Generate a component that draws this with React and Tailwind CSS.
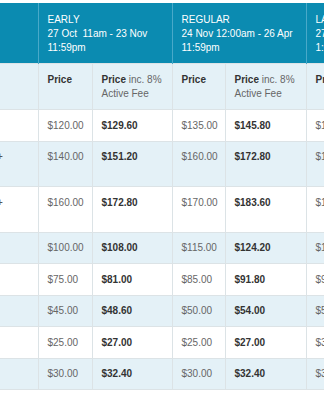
import React from 'react'

const rows = [
    { label: '', early: ['$120.00', '$129.60'], regular: ['$135.00', '$145.80'], late: '$150.00' },
    { label: '+', tall: true, early: ['$140.00', '$151.20'], regular: ['$160.00', '$172.80'], late: '$180.00' },
    { label: '+', tall: true, early: ['$160.00', '$172.80'], regular: ['$170.00', '$183.60'], late: '$190.00' },
    { label: '', early: ['$100.00', '$108.00'], regular: ['$115.00', '$124.20'], late: '$130.00' },
    { label: '', early: ['$75.00', '$81.00'], regular: ['$85.00', '$91.80'], late: '$95.00' },
    { label: '', early: ['$45.00', '$48.60'], regular: ['$50.00', '$54.00'], late: '$55.00' },
    { label: '', early: ['$25.00', '$27.00'], regular: ['$25.00', '$27.00'], late: '$35.00' },
    { label: '', early: ['$30.00', '$32.40'], regular: ['$30.00', '$32.40'], late: '$35.00' },
]

const groups = [
    { name: 'EARLY', dates: '27 Oct\u00a0 11am - 23 Nov 11:59pm' },
    { name: 'REGULAR', dates: '24 Nov 12:00am - 26 Apr 11:59pm' },
    { name: 'LATE', dates: '27 Apr 12:00am - 28 Apr 1:00pm' },
]

export default function App() {
    const cell = 'border border-[#dce3e6] px-[9px] py-[8.25px] align-top text-left'

    return (
        <div className="w-[324px] h-[400px] overflow-hidden bg-white pt-[4px] font-['Liberation_Sans',Arial,sans-serif] text-[10px] leading-[14px]">
            <table className="table-fixed border-collapse w-[440px] -mt-px">
                <colgroup>
                    <col className="w-[38px]" />
                    <col className="w-[54px]" />
                    <col className="w-[80px]" />
                    <col className="w-[53px]" />
                    <col className="w-[81px]" />
                    <col className="w-[54px]" />
                    <col className="w-[80px]" />
                </colgroup>
                <thead>
                    <tr className="bg-[#0b8bb1] text-white">
                        <th className="border-r border-[#49a9c9] border-t border-t-[#0b8bb1] border-l-0 px-[9px] pt-[9px] pb-[8px]"></th>
                        {groups.map((g) => (
                            <th
                                key={g.name}
                                colSpan={2}
                                className="border-x border-[#49a9c9] border-t border-t-[#0b8bb1] px-[9px] pt-[9px] pb-[8px] text-left font-normal align-top"
                            >
                                <div>{g.name}</div>
                                <div>{g.dates}</div>
                            </th>
                        ))}
                    </tr>
                    <tr className="bg-[#e4f1f7]">
                        <th className={`${cell} border-l-0 pt-[9px]`}></th>
                        {groups.map((g) => (
                            <React.Fragment key={g.name}>
                                <th className={`${cell} pt-[9px] font-bold text-[#333]`}>Price</th>
                                <th className={`${cell} pt-[9px] font-normal text-[#666]`}>
                                    <span className="font-bold text-[#333]">Price</span> inc. 8% Active Fee
                                </th>
                            </React.Fragment>
                        ))}
                    </tr>
                </thead>
                <tbody>
                    {rows.map((r, i) => (
                        <tr key={i} className={i % 2 === 1 ? 'bg-[#e4f1f7]' : 'bg-white'}>
                            <td className={`${cell} border-l-0 text-[#555] overflow-hidden ${r.tall ? 'h-[45.5px]' : ''}`}>
                                {r.label && <span className="block -ml-[12px]">{r.label}</span>}
                            </td>
                            <td className={`${cell} text-[#666]`}>{r.early[0]}</td>
                            <td className={`${cell} font-bold text-[#333]`}>{r.early[1]}</td>
                            <td className={`${cell} text-[#666]`}>{r.regular[0]}</td>
                            <td className={`${cell} font-bold text-[#333]`}>{r.regular[1]}</td>
                            <td className={`${cell} text-[#666]`}>{r.late}</td>
                            <td className={`${cell} font-bold text-[#333]`}></td>
                        </tr>
                    ))}
                </tbody>
            </table>
        </div>
    )
}
